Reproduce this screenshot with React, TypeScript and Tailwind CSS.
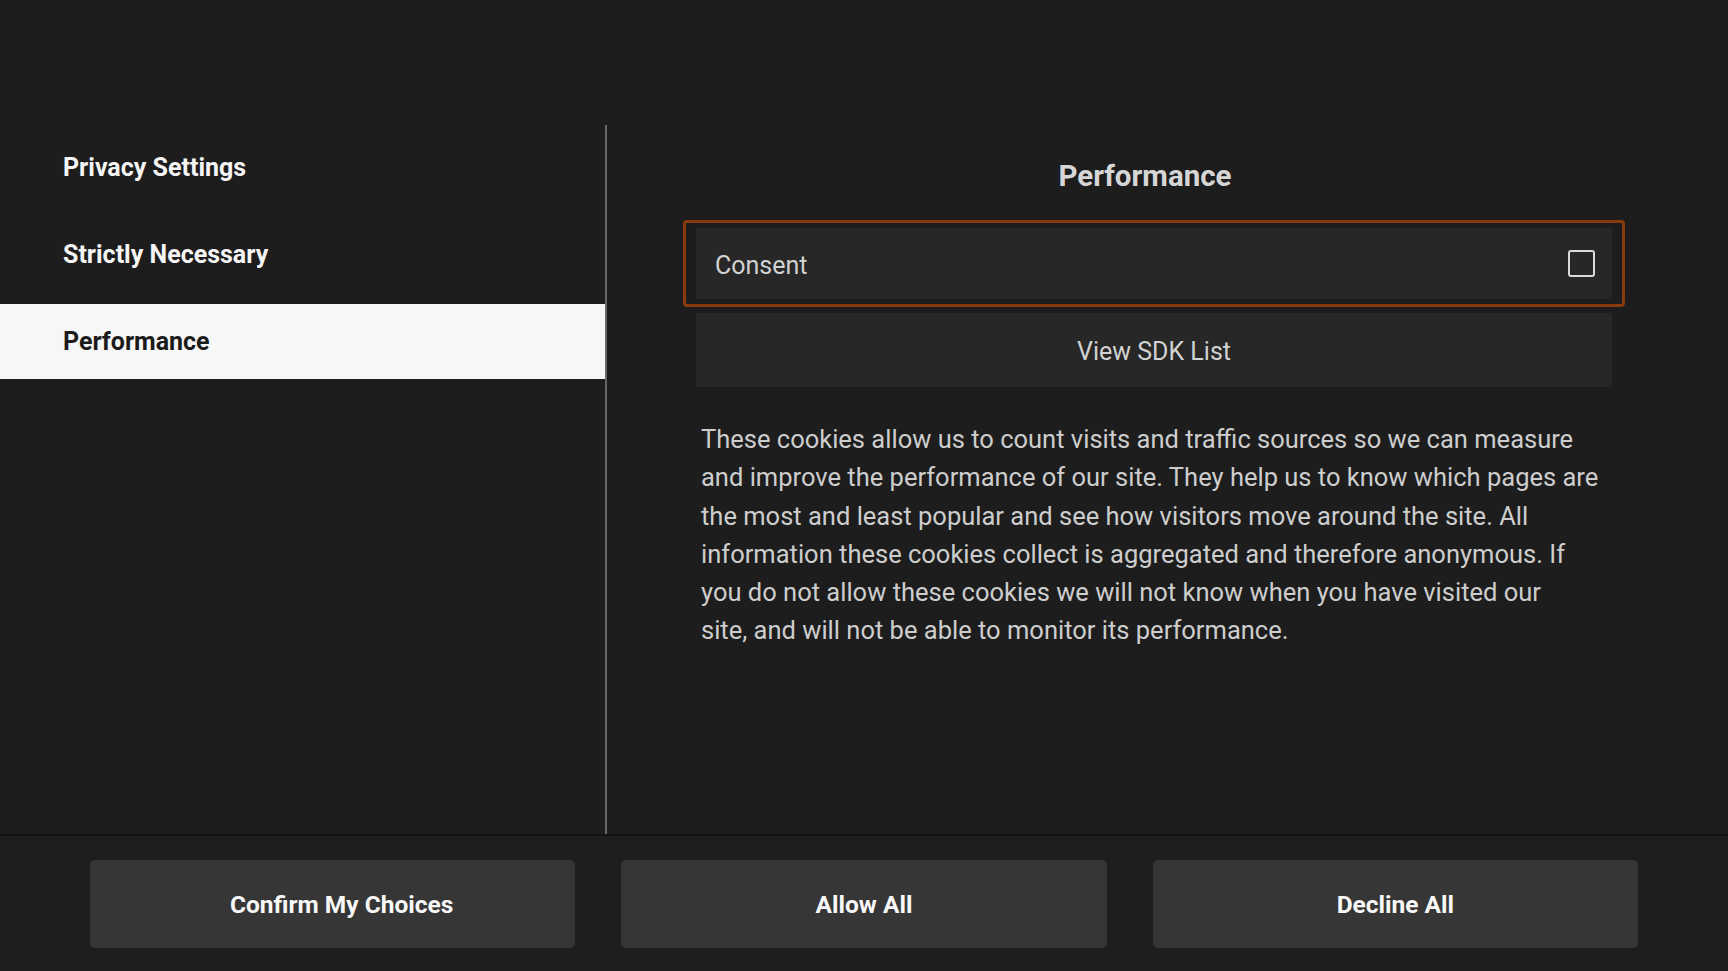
const sections = ['Privacy Settings', 'Strictly Necessary', 'Performance']

const lines = [
  'These cookies allow us to count visits and traffic sources so we can measure',
  'and improve the performance of our site. They help us to know which pages are',
  'the most and least popular and see how visitors move around the site. All',
  'information these cookies collect is aggregated and therefore anonymous. If',
  'you do not allow these cookies we will not know when you have visited our',
  'site, and will not be able to monitor its performance.',
]

const App = () => {
  const active = 'Performance'

  return (
    <div className="flex h-[971px] w-full flex-col overflow-hidden bg-[#1e1e1e] font-['Roboto',sans-serif]">
      <div className="flex h-[834px] bg-[#1d1d1d]">
        {/* left menu */}
        <div className="mt-[125px] w-[607px] shrink-0 border-r-2 border-[#666666] pt-[5px]">
          <nav className="flex flex-col gap-[12px]">
            {sections.map((s) => (
              <div
                key={s}
                className={
                  s === active
                    ? 'flex h-[75px] items-center bg-[#f7f7f7] pl-[63px] text-[25px] font-bold text-[#1b1b1b]'
                    : 'flex h-[75px] items-center pl-[63px] text-[25px] font-bold text-[#f5f5f5]'
                }
              >
                {s}
              </div>
            ))}
          </nav>
        </div>

        {/* detail */}
        <div className="flex-1 pl-[76px] pr-[103px] pt-[157px]">
          <h2 className="pr-[18px] text-center text-[29.5px] leading-[38px] font-bold text-[#d6d6d6]">Performance</h2>

          <div className="mt-[25px] rounded-[4px] border-[3px] border-[#8a3a0d] px-[10px] py-[5px]">
            <label className="flex h-[71px] items-center justify-between bg-[#272727] pl-[19px] pr-[17px]">
              <span className="pt-[4px] text-[25px] text-[#d2d2d2]">Consent</span>
              <span className="h-[27px] w-[27px] rounded-[3px] border-2 border-[#d9d9d9]" />
            </label>
          </div>

          <div className="px-[13px]">
            <button className="mt-[6px] flex h-[74px] w-full items-center justify-center bg-[#272727] pt-[3px] text-[25px] text-[#d2d2d2]">
              View SDK List
            </button>
            <p className="mt-[33px] pl-[5px] text-[25.5px] leading-[38.3px] text-[#cdcdcd]">
              {lines.map((l, i) => (
                <span key={i} className="block whitespace-nowrap">
                  {l}
                </span>
              ))}
            </p>
          </div>
        </div>
      </div>

      {/* footer buttons */}
      <div className="grid flex-1 grid-cols-3 content-start gap-[46px] border-t-2 border-[#131313] bg-[#1e1e1e] px-[90px] pt-[24px]">
        <button className="flex h-[88px] items-center justify-center rounded-[5px] bg-[#363636] pl-[18px] pt-[2px] text-[24.5px] font-bold text-[#f8f8f8]">
          Confirm My Choices
        </button>
        <button className="flex h-[88px] items-center justify-center rounded-[5px] bg-[#363636] pt-[2px] text-[24.5px] font-bold text-[#f8f8f8]">
          Allow All
        </button>
        <button className="flex h-[88px] items-center justify-center rounded-[5px] bg-[#363636] pt-[2px] text-[24.5px] font-bold text-[#f8f8f8]">
          Decline All
        </button>
      </div>
    </div>
  )
}

export default App
